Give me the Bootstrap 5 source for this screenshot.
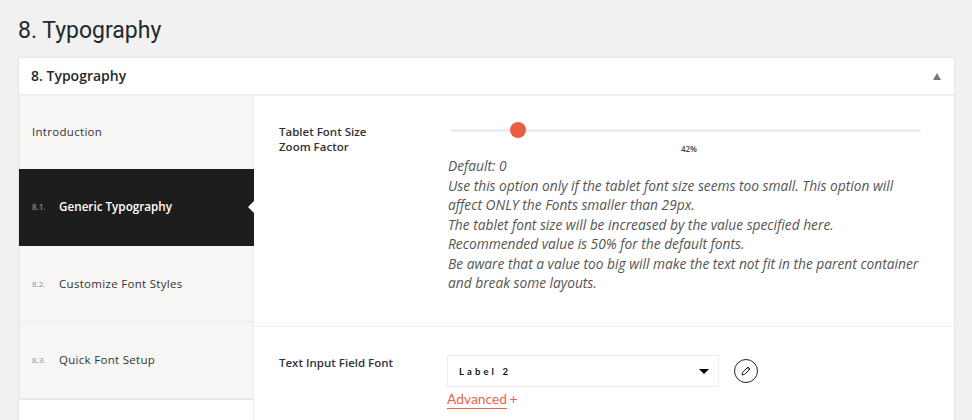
<!DOCTYPE html>
<html lang="en">
<head>
<meta charset="utf-8">
<title>Typography</title>
<link rel="stylesheet" href="https://cdn.jsdelivr.net/npm/bootstrap@5.3.0/dist/css/bootstrap.min.css">
<style>
html,body{height:420px;overflow:hidden}
body{background:#f1f1f1;font-family:"Open Sans","Liberation Sans",sans-serif;color:#23282d;padding:0 17px 0 18px}
.page-title{font-family:Roboto,"Liberation Sans",sans-serif;font-size:23px;font-weight:400;line-height:29px;margin:0;padding:16px 0 12px;color:#23282d}
.panel{background:#fff;border:1px solid #e5e5e5;border-bottom:0;height:363px;display:flex;flex-direction:column}
.panel-head{height:38px;flex:none;padding:0 12px;border-bottom:2px solid #eee}
.panel-head h2{font-size:14px;font-weight:600;margin:0;color:#23282d}
.caret-up{width:0;height:0;border-left:4px solid transparent;border-right:4px solid transparent;border-bottom:7px solid #72777c;margin-right:1px}
.side{width:235px;flex:none;background:#fff;border-right:1px solid #eee}
.side-list{list-style:none;margin:0;padding:0;border-bottom:2px solid #e8e8e8;background:#f7f6f5}
.side-item{height:76px;padding-left:12px;border-left:1px solid #eee;font-size:11.5px;color:#333;letter-spacing:.3px;border-bottom:1px solid #eaeaea}
.side-item:last-child{border-bottom:0}
.side-first{height:73px;border-bottom:0;padding-bottom:2px}
.side-num{width:27px;font-size:8px;color:#8a8a8a;letter-spacing:0}
.side-on{background:#1d1d1d;color:#fff;font-weight:600;font-size:11.7px;height:77px;border-left:0;padding:0 0 1px 13px;border-bottom:0;letter-spacing:0;margin-right:-1px;position:relative}
.side-on::after{content:"";position:absolute;right:0;top:32px;border:6px solid transparent;border-right-color:#fff;border-left:0}
.opt{display:flex;padding:0 0 0 25px}
.opt-one{height:231px;border-bottom:1px solid #eee;padding-top:28px}
.opt-two{padding-top:28px}
.opt-label{width:168px;flex:none;font-size:11.5px;font-weight:600;line-height:15px;color:#333}
.opt-body{width:480px;flex:none}
.track{height:3px;margin:5px 0 0 4px;width:470px;background:#eee;border-radius:2px;position:relative}
.thumb{position:absolute;left:59px;top:-7px;width:16px;height:16px;border-radius:50%;background:#ea5f44}
.pct{font-size:8px;line-height:10px;text-align:center;color:#444;margin:12px 0 0 7px;width:470px;font-weight:600}
.desc{font-size:13.75px;font-style:italic;line-height:19.5px;color:#555;margin:2px 0 0 1px;width:480px}
.sel{width:272px;height:32px;border:1px solid #eee;padding:0 9px 0 11px;font-family:Lato,sans-serif;font-size:9.5px;font-weight:700;letter-spacing:3.1px;color:#111;background:#fff}
.sel-text{margin-top:2px}
.sel-arrow{width:0;height:0;border-left:5px solid transparent;border-right:5px solid transparent;border-top:5px solid #000}
.edit{width:24px;height:24px;border:1px solid #222;border-radius:50%;margin-left:15px;background:#fff}
.adv{font-family:Lato,sans-serif;font-size:13.8px;line-height:16px;color:#ee5f48;margin-top:4px;word-spacing:-1px}
.adv a{color:#ee5f48;text-decoration:none;border-bottom:1px solid #ee5f48;display:inline-block;padding-bottom:1px}
</style>
</head>
<body>
<h1 class="page-title">8. Typography</h1>
<div class="panel">
  <div class="panel-head d-flex align-items-center justify-content-between">
    <h2>8. Typography</h2>
    <span class="caret-up"></span>
  </div>
  <div class="d-flex flex-grow-1">
    <div class="side">
      <ul class="side-list">
        <li class="side-item side-first d-flex align-items-center">Introduction</li>
        <li class="side-item side-on d-flex align-items-center"><span class="side-num">8.1.</span>Generic Typography</li>
        <li class="side-item d-flex align-items-center"><span class="side-num">8.2.</span>Customize Font Styles</li>
        <li class="side-item d-flex align-items-center"><span class="side-num">8.3.</span>Quick Font Setup</li>
      </ul>
    </div>
    <div class="flex-grow-1">
      <div class="opt opt-one">
        <div class="opt-label">Tablet Font Size<br>Zoom Factor</div>
        <div class="opt-body">
          <div class="track"><span class="thumb"></span></div>
          <div class="pct">42%</div>
          <div class="desc">Default: 0<br>Use this option only if the tablet font size seems too small. This option will affect ONLY the Fonts smaller than 29px.<br>The tablet font size will be increased by the value specified here.<br>Recommended value is 50% for the default fonts.<br>Be aware that a value too big will make the text not fit in the parent container and break some layouts.</div>
        </div>
      </div>
      <div class="opt opt-two">
        <div class="opt-label">Text Input Field Font</div>
        <div class="opt-body">
          <div class="d-flex align-items-center">
            <div class="sel d-flex align-items-center justify-content-between"><span class="sel-text">Label 2</span><span class="sel-arrow"></span></div>
            <div class="edit d-flex align-items-center justify-content-center">
              <svg width="12" height="12" viewBox="0 0 12 12" fill="none" stroke="#222" stroke-width="1"><path d="M2 10l.6-2.6L8 2l2 2-5.4 5.4z"/><path d="M7.2 2.8l2 2"/></svg>
            </div>
          </div>
          <div class="adv"><a href="#">Advanced</a> +</div>
        </div>
      </div>
    </div>
  </div>
</div>
<script src="https://cdn.jsdelivr.net/npm/bootstrap@5.3.0/dist/js/bootstrap.bundle.min.js"></script>
</body>
</html>
